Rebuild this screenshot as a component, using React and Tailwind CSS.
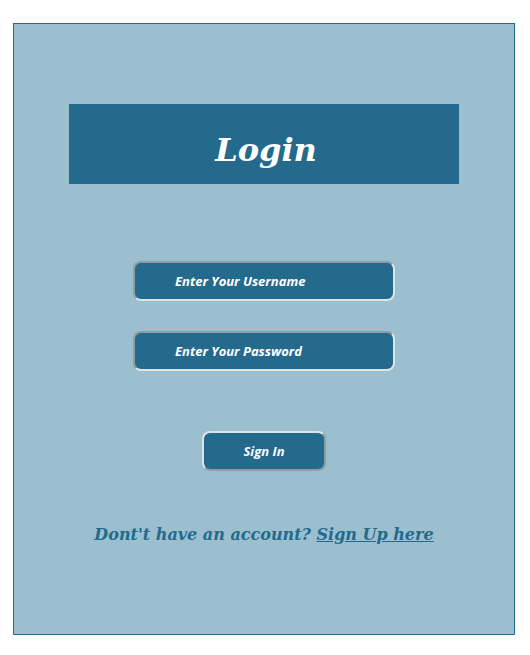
export default function App() {
  return (
    <div className="w-[530px] h-[655px] bg-white pt-[23px] pl-[13px]">
      <div className="w-[502px] h-[612px] border border-[#236a8c] bg-[#9bbfcf] flex flex-col items-center pt-[80px]">
        <div className="w-[390px] h-[80px] bg-[#236a8c] flex items-center justify-center pt-[12px] pl-[4px]">
          <h1 className="text-white text-[32px] font-bold italic leading-none" style={{ fontFamily: '"DejaVu Serif", serif' }}>Login</h1>
        </div>
        <div className="mt-[77px] flex flex-col gap-[30px]">
          <div className="w-[262px] h-[40px] bg-[#236a8c] rounded-[8px] border-2 border-t-[#8f9ca2] border-l-[#8f9ca2] border-b-[#dde3e6] border-r-[#dde3e6] flex items-center pl-[40px] pt-[2px]">
            <span className="text-white text-[13px] font-bold italic" style={{ fontFamily: '"Open Sans", sans-serif' }}>Enter Your Username</span>
          </div>
          <div className="w-[262px] h-[40px] bg-[#236a8c] rounded-[8px] border-2 border-t-[#8f9ca2] border-l-[#8f9ca2] border-b-[#dde3e6] border-r-[#dde3e6] flex items-center pl-[40px] pt-[2px]">
            <span className="text-white text-[13px] font-bold italic" style={{ fontFamily: '"Open Sans", sans-serif' }}>Enter Your Password</span>
          </div>
        </div>
        <button className="mt-[60px] w-[124px] h-[40px] bg-[#236a8c] rounded-[8px] border-2 border-t-[#dde3e6] border-l-[#dde3e6] border-b-[#8f9ca2] border-r-[#8f9ca2] flex items-center justify-center pt-[1px]">
          <span className="text-white text-[13px] font-bold italic" style={{ fontFamily: '"Open Sans", sans-serif' }}>Sign In</span>
        </button>
        <p className="mt-[52px] text-[#236a8c] text-[16px] font-bold italic" style={{ fontFamily: '"DejaVu Serif", serif' }}>
          Dont't have an account? <span className="underline">Sign Up here</span>
        </p>
      </div>
    </div>
  );
}
